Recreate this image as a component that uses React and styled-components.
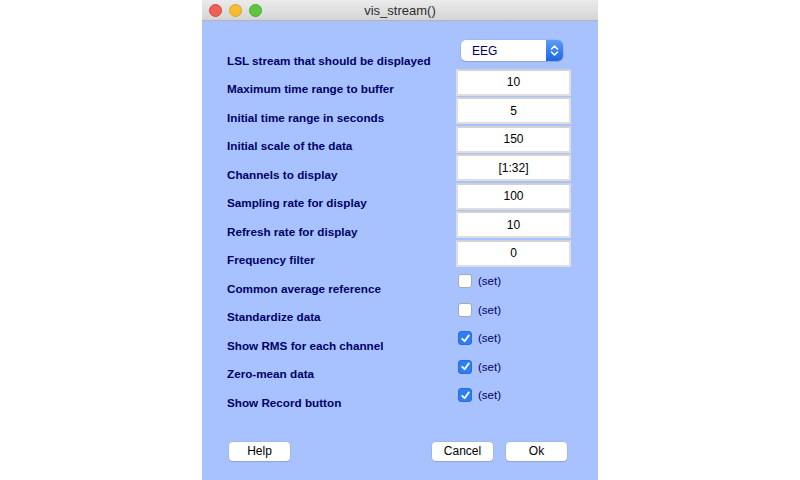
import styled, { createGlobalStyle } from 'styled-components';

const GlobalStyle = createGlobalStyle`
  html, body {
    margin: 0;
    padding: 0;
    background: #ffffff;
    font-family: 'Liberation Sans', Arial, sans-serif;
  }
`;

const fields = [
  { label: 'Maximum time range to buffer', value: '10' },
  { label: 'Initial time range in seconds', value: '5' },
  { label: 'Initial scale of the data', value: '150' },
  { label: 'Channels to display', value: '[1:32]' },
  { label: 'Sampling rate for display', value: '100' },
  { label: 'Refresh rate for display', value: '10' },
  { label: 'Frequency filter', value: '0' },
];

const checks = [
  { label: 'Common average reference', checked: false },
  { label: 'Standardize data', checked: false },
  { label: 'Show RMS for each channel', checked: true },
  { label: 'Zero-mean data', checked: true },
  { label: 'Show Record button', checked: true },
];

const App = () => (
  <Page>
    <GlobalStyle />
    <Window>
      <TitleBar>
        <Lights>
          <Light color="#ee5f57" border="#d8463f" />
          <Light color="#f5bd2f" border="#dba32a" />
          <Light color="#5fc53f" border="#4aa832" />
        </Lights>
        <Title>vis_stream()</Title>
      </TitleBar>
      <Body>
        <Row>
          <Label>LSL stream that should be displayed</Label>
          <Popup>
            <span>EEG</span>
            <PopupArrow>
              <svg width="9" height="13" viewBox="0 0 9 13">
                <path d="M1.5 5 L4.5 2 L7.5 5 M1.5 8 L4.5 11 L7.5 8" fill="none" stroke="#fff" strokeWidth="1.5" strokeLinecap="round" strokeLinejoin="round" />
              </svg>
            </PopupArrow>
          </Popup>
        </Row>
        {fields.map((f) => (
          <Row key={f.label}>
            <Label>{f.label}</Label>
            <Field>{f.value}</Field>
          </Row>
        ))}
        {checks.map((c) => (
          <Row key={c.label}>
            <Label>{c.label}</Label>
            <CheckWrap>
              <Box checked={c.checked}>
                {c.checked && (
                  <svg width="11" height="11" viewBox="0 0 11 11">
                    <path d="M2.2 5.8 L4.6 8.2 L8.8 2.4" fill="none" stroke="#fff" strokeWidth="1.8" strokeLinecap="round" strokeLinejoin="round" />
                  </svg>
                )}
              </Box>
              <SetText>(set)</SetText>
            </CheckWrap>
          </Row>
        ))}
        <Buttons>
          <Button>Help</Button>
          <RightButtons>
            <Button>Cancel</Button>
            <Button>Ok</Button>
          </RightButtons>
        </Buttons>
      </Body>
    </Window>
  </Page>
);

export default App;

const Page = styled.div`
  width: 800px;
  height: 480px;
  overflow: hidden;
  display: flex;
  justify-content: center;
`;

const Window = styled.div`
  width: 396px;
  height: 480px;
  display: flex;
  flex-direction: column;
  background: #a8c2ff;
`;

const TitleBar = styled.div`
  height: 20px;
  flex-shrink: 0;
  position: relative;
  display: flex;
  align-items: center;
  justify-content: center;
  background: linear-gradient(#ebebeb, #d5d5d5);
  border-bottom: 1px solid #b4b4b4;
`;

const Lights = styled.div`
  position: absolute;
  left: 7px;
  top: 4px;
  display: flex;
  gap: 7px;
`;

const Light = styled.span`
  width: 13px;
  height: 13px;
  border-radius: 50%;
  box-sizing: border-box;
  background: ${(p) => p.color};
  border: 0.5px solid ${(p) => p.border};
`;

const Title = styled.div`
  font-size: 13px;
  color: #2e2e2e;
  margin-top: 1px;
`;

const Body = styled.div`
  padding: 18px 27px 0 25px;
  display: flex;
  flex-direction: column;
`;

const Row = styled.div`
  height: 28.5px;
  display: flex;
  justify-content: space-between;
`;

const Label = styled.div`
  align-self: flex-end;
  height: 13px;
  line-height: 13px;
  font-size: 11.7px;
  font-weight: 700;
  color: #000066;
  transform: translateY(-1.5px);
  white-space: nowrap;
`;

const Popup = styled.div`
  margin-top: 1px;
  margin-right: 8px;
  width: 102px;
  height: 21px;
  box-sizing: border-box;
  border-radius: 5px;
  background: #fff;
  box-shadow: 0 0 0 0.5px #9aa9d8, 0 1px 1px rgba(0, 0, 0, 0.2);
  display: flex;
  align-items: center;
  justify-content: space-between;
  overflow: hidden;
  font-size: 12px;
  color: #000066;
  span {
    padding-left: 11px;
  }
`;

const PopupArrow = styled.div`
  width: 17px;
  height: 21px;
  display: flex;
  align-items: center;
  justify-content: center;
  background: linear-gradient(#5a9cf8, #1c66e5);
`;

const Field = styled.div`
  margin-top: 1px;
  width: 115px;
  height: 27px;
  box-sizing: border-box;
  border: 2px solid #dedede;
  border-top-color: #d2d2d2;
  background: #fff;
  display: flex;
  align-items: center;
  justify-content: center;
  font-size: 12px;
  color: #000;
`;

const CheckWrap = styled.div`
  width: 110px;
  margin-top: 7px;
  margin-right: 3px;
  display: flex;
  align-items: flex-start;
  gap: 6px;
`;

const Box = styled.div`
  width: 14px;
  height: 14px;
  box-sizing: border-box;
  border-radius: 3px;
  display: flex;
  align-items: center;
  justify-content: center;
  background: ${(p) => (p.checked ? '#2f7df6' : '#fff')};
  border: 0.5px solid ${(p) => (p.checked ? '#2a6ed8' : '#a9a9a9')};
`;

const SetText = styled.span`
  font-size: 11.5px;
  line-height: 14px;
  color: #000066;
`;

const Buttons = styled.div`
  margin-top: 32px;
  display: flex;
  justify-content: space-between;
  padding-left: 2px;
  padding-right: 4px;
`;

const RightButtons = styled.div`
  display: flex;
  gap: 13px;
`;

const Button = styled.div`
  width: 61px;
  height: 19px;
  box-sizing: border-box;
  border-radius: 4px;
  background: #fff;
  box-shadow: 0 0 0 0.5px #a3acc8, 0 1px 1px rgba(0, 0, 0, 0.2);
  display: flex;
  align-items: center;
  justify-content: center;
  font-size: 12px;
  color: #000;
`;
